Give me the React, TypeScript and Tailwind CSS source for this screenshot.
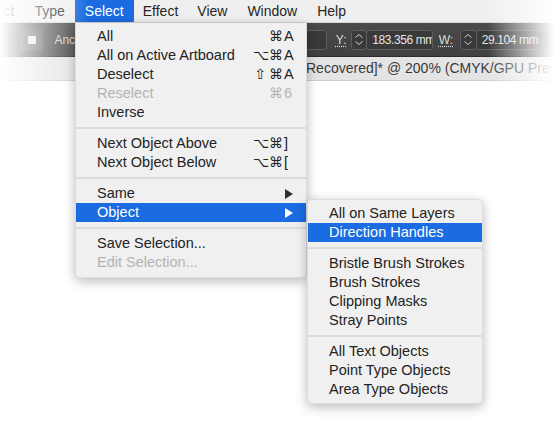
import React from "react"

type Item =
    | { sep: true }
    | { label: string; mods?: string[]; keyc?: string; disabled?: boolean; active?: boolean; sub?: boolean }

const mainMenu: Item[] = [
    { label: "All", mods: ["⌘"], keyc: "A" },
    { label: "All on Active Artboard", mods: ["⌥", "⌘"], keyc: "A" },
    { label: "Deselect", mods: ["⇧", "⌘"], keyc: "A" },
    { label: "Reselect", mods: ["⌘"], keyc: "6", disabled: true },
    { label: "Inverse" },
    { sep: true },
    { label: "Next Object Above", mods: ["⌥", "⌘"], keyc: "]" },
    { label: "Next Object Below", mods: ["⌥", "⌘"], keyc: "[" },
    { sep: true },
    { label: "Same", sub: true },
    { label: "Object", sub: true, active: true },
    { sep: true },
    { label: "Save Selection..." },
    { label: "Edit Selection...", disabled: true }
]

const subMenu: Item[] = [
    { label: "All on Same Layers" },
    { label: "Direction Handles", active: true },
    { sep: true },
    { label: "Bristle Brush Strokes" },
    { label: "Brush Strokes" },
    { label: "Clipping Masks" },
    { label: "Stray Points" },
    { sep: true },
    { label: "All Text Objects" },
    { label: "Point Type Objects" },
    { label: "Area Type Objects" }
]

const font = "font-['Liberation_Sans','DejaVu_Sans',sans-serif]"

const MenuRows = ({ items }: { items: Item[] }) => (
    <>
        {items.map((it, i) => {
            if ("sep" in it) {
                return (
                    <div key={i} className="h-[12px] flex items-center">
                        <div className="h-[2px] w-full bg-[#dcdcdc]" />
                    </div>
                )
            }
            const color = it.active ? "text-white bg-[#1b6ce0]" : it.disabled ? "text-[#b4b4b4]" : "text-[#232323]"
            return (
                <div key={i} className={`h-[19px] flex items-center pl-[21px] pr-[12px] text-[14.5px] leading-[19px] ${color}`}>
                    <span className="flex-1 whitespace-nowrap">{it.label}</span>
                    {it.keyc && (
                        <span className="flex items-center">
                            {it.mods?.map((m, j) => (
                                <span key={j} className="w-[14px] ml-[2px] text-center text-[14px] leading-[19px] font-['DejaVu_Sans',sans-serif]">{m}</span>
                            ))}
                            <span className="w-[10px] ml-[1px]">{it.keyc}</span>
                        </span>
                    )}
                    {it.sub && (
                        <svg width="8" height="10" viewBox="0 0 8 10" className="mr-[1px]">
                            <polygon points="0,0 8,5 0,10" fill={it.active ? "#ffffff" : "#2e2e2e"} />
                        </svg>
                    )}
                </div>
            )
        })}
    </>
)

const Field = ({ w, text, cls = "" }: { w: string; text: string; cls?: string }) => (
    <div className={`h-[20px] ${w} ${cls} rounded-[3px] border border-[#5e5e5e] bg-[#393939] flex items-center pl-[5px] overflow-hidden whitespace-nowrap text-[12px] tracking-[-0.4px] text-[#e4e4e4]`}>
        {text}
    </div>
)

const Spinner = () => (
    <div className="h-[20px] w-[17px] rounded-[3px] border border-[#5e5e5e] bg-[#393939] flex flex-col items-center justify-center gap-[3px]">
        <svg width="8" height="4" viewBox="0 0 8 4"><polyline points="0.5,3.5 4,0.5 7.5,3.5" fill="none" stroke="#cfcfcf" strokeWidth="1" /></svg>
        <svg width="8" height="4" viewBox="0 0 8 4"><polyline points="0.5,0.5 4,3.5 7.5,0.5" fill="none" stroke="#cfcfcf" strokeWidth="1" /></svg>
    </div>
)

const App = () => {
    return (
        <div className={`relative w-[554px] h-[442px] bg-white overflow-hidden ${font}`}>
            {/* app chrome */}
            <div className="relative">
                <div className="h-[23px] bg-[#efefef] border-b border-[#d4d4d4] flex items-center text-[14px] text-[#262626] ml-[-36px]">
                    <span className="px-[10px]">Object</span>
                    <span className="px-[10px]">Type</span>
                    <span className="px-[10px] h-full flex items-center bg-[#1b6ce0] text-white">Select</span>
                    <span className="px-[9px]">Effect</span>
                    <span className="px-[10px]">View</span>
                    <span className="px-[10px]">Window</span>
                    <span className="px-[10px]">Help</span>
                </div>
                <div className="h-[34px] bg-[linear-gradient(#4a4a4a,#404040)] border-b border-[#2c2c2c] flex items-center">
                    <div className="ml-[20px] w-[24px] h-[22px] rounded-[3px] bg-[#555] flex items-center justify-center">
                        <div className="w-[8px] h-[8px] bg-[#e8e8e8]" />
                    </div>
                    <span className="ml-[11px] w-[197px] text-[12px] text-[#cfcfcf]">Anchor:</span>
                    <Field w="w-[82px]" text="2.497 mm" />
                    <span className="ml-[9px] w-[15px] text-[12px] text-[#dcdcdc] underline decoration-dotted underline-offset-2">Y:</span>
                    <Spinner />
                    <Field w="w-[68px]" text="183.356 mm" cls="ml-[-1px]" />
                    <span className="ml-[6px] w-[22px] text-[12px] text-[#dcdcdc] underline decoration-dotted underline-offset-2">W:</span>
                    <Spinner />
                    <Field w="w-[80px]" text="29.104 mm" cls="ml-[-1px]" />
                </div>
                <div className="h-[24px] bg-[#e4e4e4] border-b border-[#cdcdcd] flex items-center pl-[306px] text-[14px] text-[#3a3a3a] whitespace-nowrap">
                    Recovered]* @ 200% (CMYK/GPU Preview)
                </div>
                <div className="absolute inset-0 bg-[linear-gradient(to_right,#ffffff,rgba(255,255,255,0.35)_10%,rgba(255,255,255,0)_16%,rgba(255,255,255,0)_88%,#ffffff_100%)]" />
            </div>

            {/* Select menu */}
            <div className="absolute left-[75px] top-[23px] w-[232px] pt-[4px] pb-[5px] bg-[#f0f0f0] rounded-b-[5px] shadow-[0_3px_12px_rgba(0,0,0,0.28)] border-x border-b border-[#d0d0d0]/60">
                <MenuRows items={mainMenu} />
            </div>

            {/* Object submenu */}
            <div className="absolute left-[307px] top-[199px] w-[176px] pt-[4px] pb-[4px] bg-[#f0f0f0] rounded-[5px] shadow-[0_3px_12px_rgba(0,0,0,0.28)] border border-[#d0d0d0]/60">
                <MenuRows items={subMenu} />
            </div>
        </div>
    )
}

export default App
